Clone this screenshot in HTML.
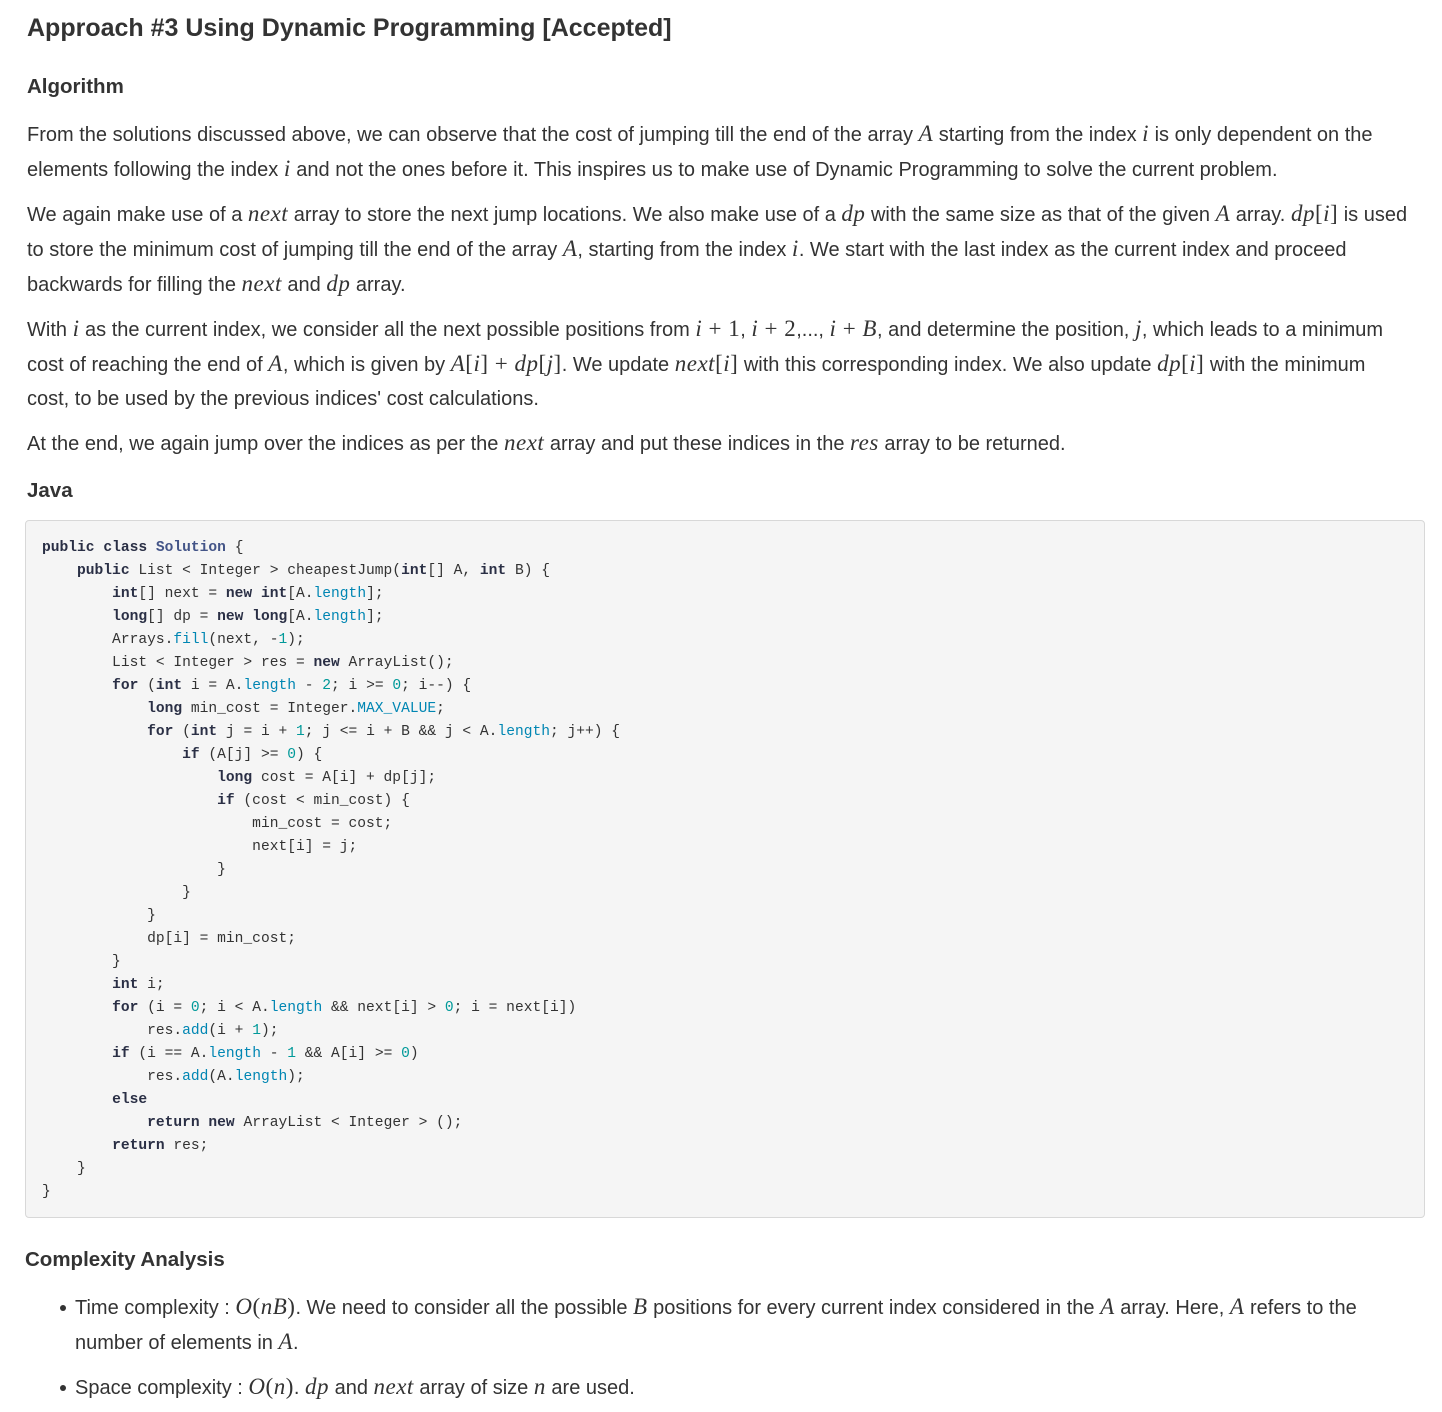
<!DOCTYPE html>
<html><head><meta charset="utf-8"><style>
html,body{margin:0;padding:0;background:#fff;}
body{width:1442px;height:1412px;position:relative;overflow:hidden;font-family:"Liberation Sans",Arial,sans-serif;color:#333;}
.a{position:absolute;left:27px;white-space:nowrap;font-size:20px;line-height:34px;letter-spacing:0;}
.m{font-family:"Liberation Serif",serif;font-style:italic;font-size:23px;letter-spacing:0.5px;}
.r{font-family:"Liberation Serif",serif;font-size:23px;font-style:normal;letter-spacing:0.5px;}
pre{position:absolute;left:25px;top:520px;width:1366px;height:680px;margin:0;padding:16px 16px 0 16px;background:#f5f5f5;border:1px solid #d8d8d8;border-radius:4px;font-family:"Liberation Mono",monospace;font-size:14.6px;line-height:23px;color:#333;}
.k{font-weight:bold;color:#2a2f45;}
.c{font-weight:bold;color:#445588;}
.n{color:#009999;}
.t{color:#0086b3;}
.b{position:absolute;left:75px;white-space:nowrap;font-size:20px;line-height:34px;}
.b:before{content:"";position:absolute;left:-15px;top:15px;width:6px;height:6px;border-radius:50%;background:#333;}
</style></head><body>
<div class="a" style="top:11px;font-size:25px;font-weight:bold;">Approach #3 Using Dynamic Programming [Accepted]</div>
<div class="a" style="top:70px;font-weight:bold;font-size:20.5px;">Algorithm</div>
<div class="a" style="top:117px;">From the solutions discussed above, we can observe that the cost of jumping till the end of the array <span class="m">A</span> starting from the index <span class="m">i</span> is only dependent on the<br>elements following the index <span class="m">i</span> and not the ones before it. This inspires us to make use of Dynamic Programming to solve the current problem.</div>
<div class="a" style="top:197px;">We again make use of a <span class="m">next</span> array to store the next jump locations. We also make use of a <span class="m">dp</span> with the same size as that of the given <span class="m">A</span> array. <span class="m">dp</span><span class="r">[</span><span class="m">i</span><span class="r">]</span> is used<br>to store the minimum cost of jumping till the end of the array <span class="m">A</span>, starting from the index <span class="m">i</span>. We start with the last index as the current index and proceed<br>backwards for filling the <span class="m">next</span> and <span class="m">dp</span> array.</div>
<div class="a" style="top:312px;">With <span class="m">i</span> as the current index, we consider all the next possible positions from <span class="m">i</span><span class="r"> + 1</span>, <span class="m">i</span><span class="r"> + 2</span>,..., <span class="m">i</span><span class="r"> + </span><span class="m">B</span>, and determine the position, <span class="m">j</span>, which leads to a minimum<br>cost of reaching the end of <span class="m">A</span>, which is given by <span class="m">A</span><span class="r">[</span><span class="m">i</span><span class="r">] + </span><span class="m">dp</span><span class="r">[</span><span class="m">j</span><span class="r">]</span>. We update <span class="m">next</span><span class="r">[</span><span class="m">i</span><span class="r">]</span> with this corresponding index. We also update <span class="m">dp</span><span class="r">[</span><span class="m">i</span><span class="r">]</span> with the minimum<br>cost, to be used by the previous indices' cost calculations.</div>
<div class="a" style="top:426px;">At the end, we again jump over the indices as per the <span class="m">next</span> array and put these indices in the <span class="m">res</span> array to be returned.</div>
<div class="a" style="top:474px;font-weight:bold;font-size:20.5px;">Java</div>
<pre><span class="k">public</span> <span class="k">class</span> <span class="c">Solution</span> {
    <span class="k">public</span> List &lt; Integer &gt; cheapestJump(<span class="k">int</span>[] A, <span class="k">int</span> B) {
        <span class="k">int</span>[] next = <span class="k">new</span> <span class="k">int</span>[A.<span class="t">length</span>];
        <span class="k">long</span>[] dp = <span class="k">new</span> <span class="k">long</span>[A.<span class="t">length</span>];
        Arrays.<span class="t">fill</span>(next, -<span class="n">1</span>);
        List &lt; Integer &gt; res = <span class="k">new</span> ArrayList();
        <span class="k">for</span> (<span class="k">int</span> i = A.<span class="t">length</span> - <span class="n">2</span>; i &gt;= <span class="n">0</span>; i--) {
            <span class="k">long</span> min_cost = Integer.<span class="t">MAX_VALUE</span>;
            <span class="k">for</span> (<span class="k">int</span> j = i + <span class="n">1</span>; j &lt;= i + B &amp;&amp; j &lt; A.<span class="t">length</span>; j++) {
                <span class="k">if</span> (A[j] &gt;= <span class="n">0</span>) {
                    <span class="k">long</span> cost = A[i] + dp[j];
                    <span class="k">if</span> (cost &lt; min_cost) {
                        min_cost = cost;
                        next[i] = j;
                    }
                }
            }
            dp[i] = min_cost;
        }
        <span class="k">int</span> i;
        <span class="k">for</span> (i = <span class="n">0</span>; i &lt; A.<span class="t">length</span> &amp;&amp; next[i] &gt; <span class="n">0</span>; i = next[i])
            res.<span class="t">add</span>(i + <span class="n">1</span>);
        <span class="k">if</span> (i == A.<span class="t">length</span> - <span class="n">1</span> &amp;&amp; A[i] &gt;= <span class="n">0</span>)
            res.<span class="t">add</span>(A.<span class="t">length</span>);
        <span class="k">else</span>
            <span class="k">return</span> <span class="k">new</span> ArrayList &lt; Integer &gt; ();
        <span class="k">return</span> res;
    }
}</pre>
<div class="a" style="top:1243px;left:25px;font-weight:bold;font-size:20.5px;">Complexity Analysis</div>
<div class="b" style="top:1290px;">Time complexity : <span class="m">O</span><span class="r">(</span><span class="m">nB</span><span class="r">)</span>. We need to consider all the possible <span class="m">B</span> positions for every current index considered in the <span class="m">A</span> array. Here, <span class="m">A</span> refers to the<br>number of elements in <span class="m">A</span>.</div>
<div class="b" style="top:1370px;">Space complexity : <span class="m">O</span><span class="r">(</span><span class="m">n</span><span class="r">)</span>. <span class="m">dp</span> and <span class="m">next</span> array of size <span class="m">n</span> are used.</div>
</body></html>
